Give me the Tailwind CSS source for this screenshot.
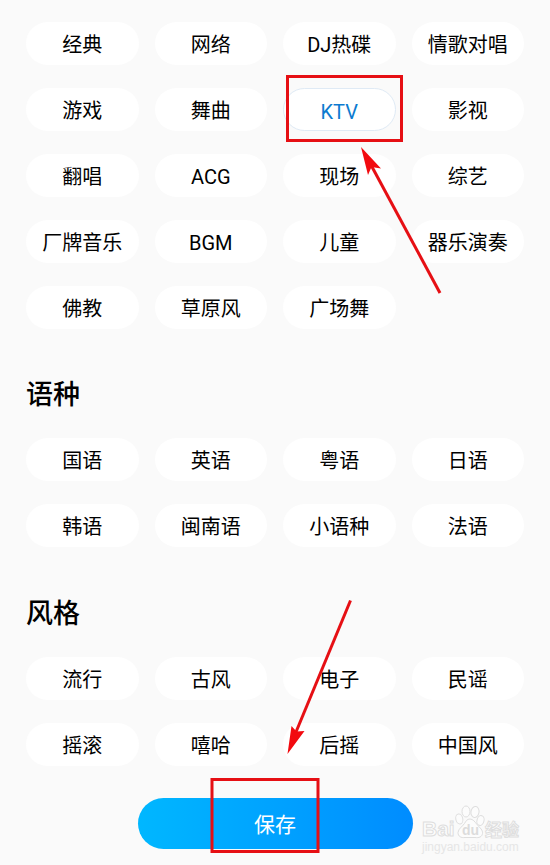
<!DOCTYPE html>
<html lang="zh-CN">
<head>
  <meta charset="UTF-8" />
  <meta name="viewport" content="width=device-width, initial-scale=1.0"/>
  <title>选择标签</title>
  <script src="https://cdn.jsdelivr.net/npm/@tailwindcss/browser@4"></script>
</head>
<body class="bg-[#fafafa] min-h-screen text-black font-['Roboto','Noto_Sans_CJK_SC',sans-serif]">

  <main class="relative px-[26px] pt-[22px] pb-4">

    <!-- Theme tags -->
    <div class="grid grid-cols-4 gap-x-4 gap-y-[23px] text-[20px] leading-10 whitespace-nowrap">
      <button type="button" class="h-[43px] pt-[3px] rounded-full bg-white">经典</button>
      <button type="button" class="h-[43px] pt-[3px] rounded-full bg-white">网络</button>
      <button type="button" class="h-[43px] pt-[3px] rounded-full bg-white">DJ热碟</button>
      <button type="button" class="h-[43px] pt-[3px] rounded-full bg-white">情歌对唱</button>
      <button type="button" class="h-[43px] pt-[3px] rounded-full bg-white">游戏</button>
      <button type="button" class="h-[43px] pt-[3px] rounded-full bg-white">舞曲</button>
      <button type="button" aria-pressed="true" class="h-[43px] pt-[3px] rounded-full bg-white border border-[#dfeaf5] text-[#0c7bd0]">KTV</button>
      <button type="button" class="h-[43px] pt-[3px] rounded-full bg-white">影视</button>
      <button type="button" class="h-[43px] pt-[3px] rounded-full bg-white">翻唱</button>
      <button type="button" class="h-[43px] pt-[3px] rounded-full bg-white">ACG</button>
      <button type="button" class="h-[43px] pt-[3px] rounded-full bg-white">现场</button>
      <button type="button" class="h-[43px] pt-[3px] rounded-full bg-white">综艺</button>
      <button type="button" class="h-[43px] pt-[3px] rounded-full bg-white">厂牌音乐</button>
      <button type="button" class="h-[43px] pt-[3px] rounded-full bg-white">BGM</button>
      <button type="button" class="h-[43px] pt-[3px] rounded-full bg-white">儿童</button>
      <button type="button" class="h-[43px] pt-[3px] rounded-full bg-white">器乐演奏</button>
      <button type="button" class="h-[43px] pt-[3px] rounded-full bg-white">佛教</button>
      <button type="button" class="h-[43px] pt-[3px] rounded-full bg-white">草原风</button>
      <button type="button" class="h-[43px] pt-[3px] rounded-full bg-white">广场舞</button>
    </div>

    <!-- Language tags -->
    <h2 class="mt-[46px] mb-[23px] text-[27px] leading-10 font-medium">语种</h2>
    <div class="grid grid-cols-4 gap-x-4 gap-y-[23px] text-[20px] leading-10 whitespace-nowrap">
      <button type="button" class="h-[43px] pt-[3px] rounded-full bg-white">国语</button>
      <button type="button" class="h-[43px] pt-[3px] rounded-full bg-white">英语</button>
      <button type="button" class="h-[43px] pt-[3px] rounded-full bg-white">粤语</button>
      <button type="button" class="h-[43px] pt-[3px] rounded-full bg-white">日语</button>
      <button type="button" class="h-[43px] pt-[3px] rounded-full bg-white">韩语</button>
      <button type="button" class="h-[43px] pt-[3px] rounded-full bg-white">闽南语</button>
      <button type="button" class="h-[43px] pt-[3px] rounded-full bg-white">小语种</button>
      <button type="button" class="h-[43px] pt-[3px] rounded-full bg-white">法语</button>
    </div>

    <!-- Style tags -->
    <h2 class="mt-[47px] mb-[23px] text-[27px] leading-10 font-medium">风格</h2>
    <div class="grid grid-cols-4 gap-x-4 gap-y-[23px] text-[20px] leading-10 whitespace-nowrap">
      <button type="button" class="h-[43px] pt-[3px] rounded-full bg-white">流行</button>
      <button type="button" class="h-[43px] pt-[3px] rounded-full bg-white">古风</button>
      <button type="button" class="h-[43px] pt-[3px] rounded-full bg-white">电子</button>
      <button type="button" class="h-[43px] pt-[3px] rounded-full bg-white">民谣</button>
      <button type="button" class="h-[43px] pt-[3px] rounded-full bg-white">摇滚</button>
      <button type="button" class="h-[43px] pt-[3px] rounded-full bg-white">嘻哈</button>
      <button type="button" class="h-[43px] pt-[3px] rounded-full bg-white">后摇</button>
      <button type="button" class="h-[43px] pt-[3px] rounded-full bg-white">中国风</button>
    </div>

    <!-- Save -->
    <div class="mt-8 flex justify-center">
      <button type="button" class="h-[51px] w-[275px] pt-[3px] rounded-full bg-linear-to-r from-[#00b7ff] to-[#008cff] text-[21px] leading-[48px] text-white">保存</button>
    </div>

    <!-- Tutorial marks and watermark -->
    <svg class="absolute top-0 left-0 pointer-events-none" width="550" height="865" viewBox="0 0 550 865" fill="none">
      <g stroke="#e60f14" stroke-width="3">
        <rect x="287.5" y="76.5" width="114" height="64"/>
        <rect x="212" y="779.5" width="106" height="72"/>
        <path d="M371 165L440 293"/>
        <path d="M350.500 600.500L296 732"/>
      </g>
      <g fill="#f20a0f">
        <path d="M361 147L381 168.500L371.500 167L368 175Z"/>
        <path d="M287.500 754L291.500 726L296.500 731.500L304.500 731Z"/>
      </g>
      <g fill="#fcfcfc" stroke="#dedede" stroke-width="1">
        <text x="422" y="836" font-size="21" font-weight="700" font-family="Liberation Sans, sans-serif">Bai</text>
        <ellipse cx="459.300" cy="819" rx="3.500" ry="5" transform="rotate(-12 459.300 819)"/>
        <ellipse cx="466" cy="811.500" rx="4" ry="5.500"/>
        <ellipse cx="475" cy="812" rx="4" ry="5.500" transform="rotate(10 475 812)"/>
        <ellipse cx="480.500" cy="820.500" rx="3.500" ry="5" transform="rotate(15 480.500 820.500)"/>
        <path d="M470 819C473 819 475 822 477 824.500C480 828 483 830 482.500 833.500C482 837 479 838 475 837.500H465C461 838 458 836.500 458 832.500C458.500 828.500 462 827 464.500 823.500C466 821 467 819 470 819Z"/>
        <text x="485" y="836" font-size="17" font-weight="700" font-family="Noto Sans CJK SC, sans-serif">经验</text>
      </g>
      <text x="462" y="835" fill="#dcdcdc" font-size="14" font-weight="700" font-family="Liberation Sans, sans-serif">du</text>
      <text x="422" y="851" fill="#e6e6e6" font-size="12" font-family="Liberation Sans, sans-serif">jingyan.baidu.com</text>
    </svg>
  </main>

</body>
</html>
